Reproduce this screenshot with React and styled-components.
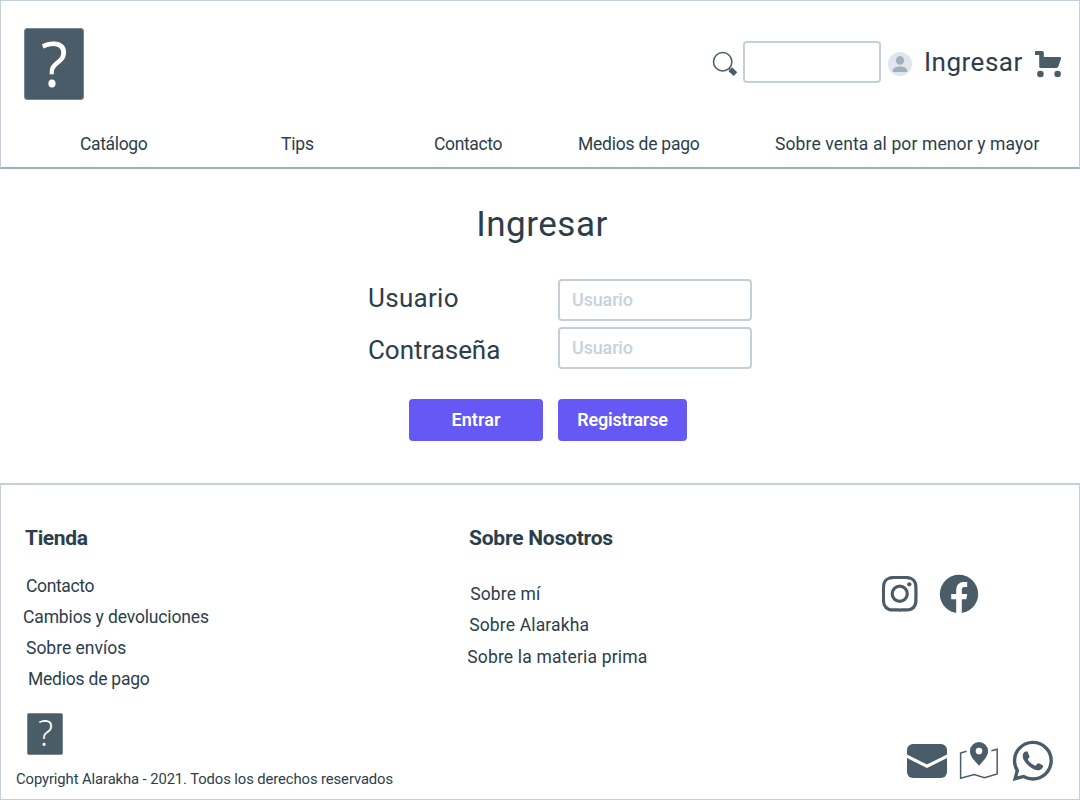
import React from 'react';
import styled, { createGlobalStyle } from 'styled-components';
import { BiLogoInstagram, BiLogoWhatsapp } from 'react-icons/bi';

const ink = '#2c3e4c';
const slate = '#4b5c69';
const line = '#c3cfd9';

const GlobalStyle = createGlobalStyle`
  *, *::before, *::after { box-sizing: border-box; }
  body {
    margin: 0;
    background: #fff;
    color: ${ink};
    font-family: Roboto, "Liberation Sans", sans-serif;
  }
`;

const Page = styled.div`
  width: 1080px;
  height: 800px;
  display: flex;
  flex-direction: column;
  overflow: hidden;
`;

const Header = styled.header`
  height: 169px;
  flex: none;
  border: 1px solid ${line};
  border-bottom: 2px solid #9fafbc;
`;

const TopBar = styled.div`
  height: 128px;
  display: flex;
  align-items: flex-start;
  justify-content: space-between;
  padding: 27px 17px 0 23px;
`;

const Logo = styled.div`
  width: ${p => (p.$small ? 36 : 60)}px;
  height: ${p => (p.$small ? 42 : 72)}px;
  padding-bottom: ${p => (p.$small ? 3 : 3)}px;
  padding-left: ${p => (p.$small ? 1 : 1)}px;
  flex: none;
  display: flex;
  align-items: center;
  justify-content: center;
  background: ${slate};
  border: 1px solid #788792;
  border-radius: ${p => (p.$small ? 2 : 3)}px;
  color: #fff;
  font-family: "Open Sans", "Noto Sans", sans-serif;
  font-size: ${p => (p.$small ? 36 : 62)}px;
  font-weight: ${p => (p.$small ? 360 : 400)};
  line-height: 1;
`;

const Tools = styled.div`
  display: flex;
  align-items: center;
  padding-top: 13px;
`;

const Field = styled.input`
  display: block;
  width: ${p => p.$width}px;
  height: 42px;
  border: 2px solid ${line};
  border-radius: 4px;
  padding: 0 12px 2px;
  background: #fff;
  color: ${ink};
  font: 500 18px/36px Roboto, sans-serif;
  letter-spacing: -0.15px;
  outline: none;
  &::placeholder { color: #c7d2dc; opacity: 1; }
`;

const SearchIcon = styled.svg`
  width: 26px;
  height: 26px;
  margin: 3px 5px 0 0;
`;

const Avatar = styled.svg`
  width: 24px;
  height: 24px;
  margin: 4px 12px 0 7px;
`;

const Account = styled.a`
  width: 110px;
  font-size: 26px;
  line-height: 42px;
  letter-spacing: 0.5px;
`;

const CartIcon = styled.svg`
  width: 28px;
  height: 28px;
  margin-top: 5px;
`;

const Nav = styled.nav`
  display: grid;
  grid-template-columns: 201px 153px 144px 197px auto;
  padding-left: 79px;
`;

const Link = styled.a`
  display: block;
  font-size: 17.5px;
  line-height: 31px;
  letter-spacing: ${p => p.$track || 0}px;
  margin-left: ${p => p.$indent || 0}px;
  margin-top: ${p => p.$drop || 0}px;
  white-space: nowrap;
`;

const Main = styled.main`
  height: 314px;
  flex: none;
  display: flex;
  flex-direction: column;
  align-items: center;
  padding-top: 35px;
`;

const Title = styled.h1`
  margin: 0;
  padding-left: 4px;
  font-size: 35px;
  font-weight: 400;
  line-height: 42px;
  letter-spacing: 0.5px;
`;

const Form = styled.form`
  width: 384px;
  margin: 33px 0 0 40px;
  display: flex;
  flex-direction: column;
`;

const FormRow = styled.label`
  display: flex;
  justify-content: space-between;
  margin-bottom: 6px;
`;

const Label = styled.span`
  font-size: 26px;
  line-height: 42px;
  height: 42px;
  padding-top: ${p => p.$drop || 0}px;
  margin-top: ${p => p.$lift || 0}px;
  letter-spacing: ${p => p.$track}px;
`;

const Actions = styled.div`
  display: flex;
  gap: 15px;
  padding: 24px 0 0 41px;
`;

const Button = styled.button`
  width: ${p => p.$width}px;
  height: 42px;
  padding: 0;
  border: 0;
  border-radius: 4px;
  background: #6558f5;
  color: #fff;
  font: 600 18px/42px Roboto, sans-serif;
  letter-spacing: ${p => p.$track}px;
`;

const Footer = styled.footer`
  flex: 1;
  display: grid;
  grid-template-columns: 444px 1fr 195px;
  border: 1px solid ${line};
  border-top-width: 2px;
`;

const Column = styled.section`
  display: flex;
  flex-direction: column;
  align-items: flex-start;
  padding-top: 37px;
`;

const Heading = styled.h2`
  margin: 0 0 ${p => p.$gap}px 24px;
  font-size: 21px;
  font-weight: 700;
  line-height: 32px;
  letter-spacing: ${p => p.$track}px;
`;

const FooterLogo = styled.div`
  padding: 18px 0 0 26px;
`;

const Copyright = styled.p`
  margin: 12px 0 0 15px;
  font-size: 14.8px;
  line-height: 24px;
  letter-spacing: -0.09px;
  white-space: nowrap;
`;

const Contact = styled.section`
  display: flex;
  flex-direction: column;
  justify-content: space-between;
  padding: 84px 19px 11px 0;
  color: ${slate};
`;

const Social = styled.div`
  display: flex;
  align-items: center;
  height: 50px;
  gap: 15px;
  padding-left: 8px;
  margin-left: -16px;
`;

const Channels = styled.div`
  display: flex;
  align-items: center;
  height: 54px;
  padding-left: 23px;
`;

const FacebookIcon = styled.svg`
  width: 40px;
  height: 40px;
`;

const MailIcon = styled.svg`
  width: 40px;
  height: 34px;
  flex: none;
`;

const MapIcon = styled.svg`
  width: 40px;
  height: 38px;
  margin: 0 7px 0 12px;
  flex: none;
`;

const Chat = styled.span`
  display: flex;
  flex: none;
`;

export default function App() {
  return (
    <Page>
      <GlobalStyle />
      <Header>
        <TopBar>
          <Logo>?</Logo>
          <Tools>
            <SearchIcon viewBox="0 0 26 26" fill="none" stroke={slate}>
              <circle cx="10.7" cy="10.7" r="9.2" strokeWidth="1.5" />
              <path d="M16.7 17.3l2 1.600" strokeWidth="1.2" />
              <path d="M18.200 18.200l5.200 5" strokeWidth="5.200" />
            </SearchIcon>
            <Field $width={138} aria-label="Buscar" />
            <Avatar viewBox="0 0 24 24">
              <circle cx="12" cy="12" r="12" fill="#dfe6ed" />
              <ellipse cx="12" cy="8.4" rx="4" ry="4.3" fill="#9fafbc" />
              <path d="M4.8 20v-1.4c0-2.8 4.2-4 7.2-4s7.2 1.2 7.2 4V20z" fill="#9fafbc" />
            </Avatar>
            <Account>Ingresar</Account>
            <CartIcon viewBox="0 0 28 28" fill={slate}>
              <path d="M1 0h7.2q1.6 0 1.6 1.8V6H26q1.5.2 1 1.8L24.3 15.6q-.6 1.5-2.2 1.5H6.7q-1.5 0-1.5-1.5V3.900H1z" />
              <circle cx="6.400" cy="23" r="3.300" />
              <circle cx="23.600" cy="23" r="3.300" />
            </CartIcon>
          </Tools>
        </TopBar>
        <Nav>
          <Link $track={-0.35}>Catálogo</Link>
          <Link $track={-0.2}>Tips</Link>
          <Link $track={-0.35}>Contacto</Link>
          <Link $track={-0.22}>Medios de pago</Link>
          <Link $track={0.12}>Sobre venta al por menor y mayor</Link>
        </Nav>
      </Header>

      <Main>
        <Title>Ingresar</Title>
        <Form>
          <FormRow>
            <Label $track={0.3} $lift={-2}>Usuario</Label>
            <Field $width={194} placeholder="Usuario" />
          </FormRow>
          <FormRow>
            <Label $track={-0.05} $drop={2}>Contraseña</Label>
            <Field $width={194} placeholder="Usuario" />
          </FormRow>
          <Actions>
            <Button type="button" $width={134} $track={0.1}>Entrar</Button>
            <Button type="button" $width={129} $track={-0.2}>Registrarse</Button>
          </Actions>
        </Form>
      </Main>

      <Footer>
        <Column>
          <Heading $gap={17} $track={-0.35}>Tienda</Heading>
          <Link $indent={25} $track={-0.35}>Contacto</Link>
          <Link $indent={22} $track={-0.14}>Cambios y devoluciones</Link>
          <Link $indent={25}>Sobre envíos</Link>
          <Link $indent={27} $track={-0.22}>Medios de pago</Link>
          <FooterLogo>
            <Logo $small>?</Logo>
          </FooterLogo>
          <Copyright>Copyright Alarakha - 2021. Todos los derechos reservados</Copyright>
        </Column>
        <Column>
          <Heading $gap={25} $track={-0.23}>Sobre Nosotros</Heading>
          <Link $indent={25.2} $track={0.12}>Sobre mí</Link>
          <Link $indent={24.2} $track={0.15}>Sobre Alarakha</Link>
          <Link $indent={22.2} $track={0.17} $drop={1}>Sobre la materia prima</Link>
        </Column>
        <Contact>
          <Social>
            <BiLogoInstagram size={47.5} />
            <FacebookIcon viewBox="0 0 40 40">
              <circle cx="20" cy="20" r="19.2" fill={slate} />
              <path d="M17.200 40V25.200h-5v-5.200h5v-3.600c0-5.800 3.200-8.400 7.700-8.400h3.300v5h-2.500c-2.300 0-2.900 1.200-2.900 3.100v3.900h5.400l-.9 5.200h-4.500V40z" fill="#fff" />
            </FacebookIcon>
          </Social>
          <Channels>
            <MailIcon viewBox="0 0 40 34">
              <rect width="40" height="34" rx="6" fill={slate} />
              <path d="M-1 11.700L20 22.300 41 11.700" fill="none" stroke="#fff" strokeWidth="3.200" />
            </MailIcon>
            <MapIcon viewBox="0 0 40 38" fill="none">
              <path d="M7.600 9.300L1.600 11v25.300l13.600-3.700 10.300 3.200L38.200 32V7.200l-5.800 1.500" stroke={slate} strokeWidth="1.500" />
              <path fillRule="evenodd" d="M20 0a9.100 9.100 0 0 0-9.100 9.100c0 5.500 4.700 9.600 9.100 14.700 4.400-5.100 9.100-9.200 9.100-14.700A9.100 9.100 0 0 0 20 0zm0 5.800a3.300 3.300 0 1 1 0 6.600 3.300 3.300 0 0 1 0-6.600z" fill={slate} />
            </MapIcon>
            <Chat><BiLogoWhatsapp size={53.5} /></Chat>
          </Channels>
        </Contact>
      </Footer>
    </Page>
  );
}
